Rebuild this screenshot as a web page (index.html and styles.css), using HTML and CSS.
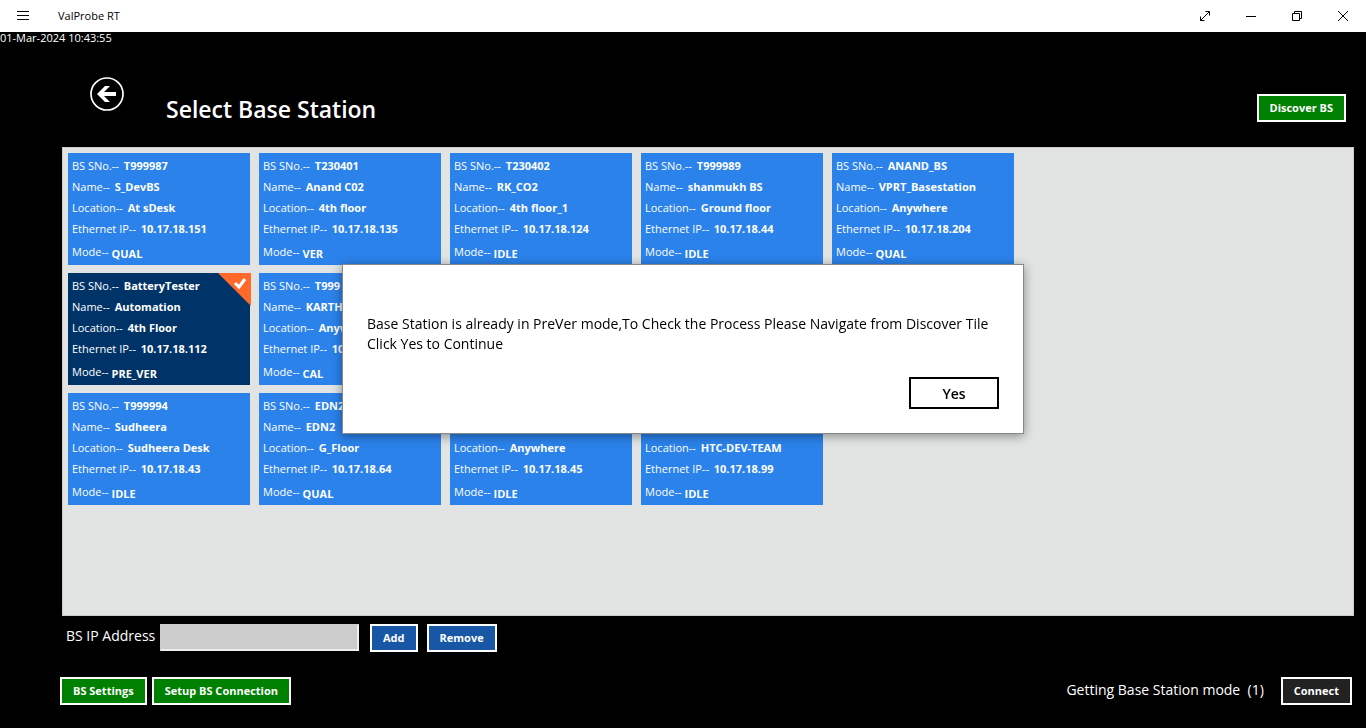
FILE: index.html
```html
<!DOCTYPE html>
<html lang="en">
<head>
<meta charset="utf-8">
<title>ValProbe RT</title>
<link rel="stylesheet" href="styles.css">
</head>
<body>
<header class="titlebar">
  <button class="tb-btn tb-menu" aria-label="Menu"><svg width="12" height="12" viewBox="0 0 12 12" shape-rendering="crispEdges"><path d="M0 1.5h12M0 5.5h12M0 9.5h12"/></svg></button>
  <span class="app-name">ValProbe RT</span>
  <button class="tb-btn" aria-label="Full screen"><svg width="12" height="12" viewBox="0 0 12 12"><path d="M1.500 10.500l9-9M6.500 1.500h4v4M1.500 6.500v4h4"/></svg></button>
  <button class="tb-btn" aria-label="Minimize"><svg width="12" height="12" viewBox="0 0 12 12" shape-rendering="crispEdges"><path d="M1 6.500h10"/></svg></button>
  <button class="tb-btn" aria-label="Restore"><svg width="12" height="12" viewBox="0 0 12 12"><path d="M1.500 3.500h7v7h-7zM3.500 3.500v-2h7v7h-2"/></svg></button>
  <button class="tb-btn" aria-label="Close"><svg width="12" height="12" viewBox="0 0 12 12"><path d="M1 1l10 10M11 1L1 11"/></svg></button>
</header>
<main class="page">
  <time class="clock">01-Mar-2024 10:43:55</time>
  <div class="heading">
    <button class="back" aria-label="Back"><svg width="34" height="34" viewBox="0 0 34 34"><circle cx="17" cy="17" r="16" fill="none" stroke="#fff" stroke-width="1.700"/><path d="M7 17l8-8h5l-6 6h12v4H14l6 6h-5z" fill="#fff"/></svg></button>
    <h1>Select Base Station</h1>
    <button class="btn green">Discover BS</button>
  </div>
  <section class="panel">
    <div class="tiles">
      <article class="tile"><p>BS SNo.-- <b>T999987</b></p><p>Name-- <b>S_DevBS</b></p><p>Location-- <b>At sDesk</b></p><p>Ethernet IP-- <b>10.17.18.151</b></p><p class="mode">Mode--<b>QUAL</b></p></article>
      <article class="tile"><p>BS SNo.-- <b>T230401</b></p><p>Name-- <b>Anand C02</b></p><p>Location-- <b>4th floor</b></p><p>Ethernet IP-- <b>10.17.18.135</b></p><p class="mode">Mode--<b>VER</b></p></article>
      <article class="tile"><p>BS SNo.-- <b>T230402</b></p><p>Name-- <b>RK_CO2</b></p><p>Location-- <b>4th floor_1</b></p><p>Ethernet IP-- <b>10.17.18.124</b></p><p class="mode">Mode--<b>IDLE</b></p></article>
      <article class="tile"><p>BS SNo.-- <b>T999989</b></p><p>Name-- <b>shanmukh BS</b></p><p>Location-- <b>Ground floor</b></p><p>Ethernet IP-- <b>10.17.18.44</b></p><p class="mode">Mode--<b>IDLE</b></p></article>
      <article class="tile"><p>BS SNo.-- <b>ANAND_BS</b></p><p>Name-- <b>VPRT_Basestation</b></p><p>Location-- <b>Anywhere</b></p><p>Ethernet IP-- <b>10.17.18.204</b></p><p class="mode">Mode--<b>QUAL</b></p></article>
      <article class="tile selected"><p>BS SNo.-- <b>BatteryTester</b></p><p>Name-- <b>Automation</b></p><p>Location-- <b>4th Floor</b></p><p>Ethernet IP-- <b>10.17.18.112</b></p><p class="mode">Mode--<b>PRE_VER</b></p>
        <svg class="corner" width="33" height="33" viewBox="0 0 33 33"><path d="M0 0h33v33z" fill="#ff6a2b"/><path d="M17 10l4 4 6-8" fill="none" stroke="#fff" stroke-width="3"/></svg></article>
      <article class="tile"><p>BS SNo.-- <b>T999</b></p><p>Name-- <b>KARTH</b></p><p>Location-- <b>Anyw</b></p><p>Ethernet IP-- <b>10</b></p><p class="mode">Mode--<b>CAL</b></p></article>
      <article class="tile first"><p>BS SNo.-- <b>T999994</b></p><p>Name-- <b>Sudheera</b></p><p>Location-- <b>Sudheera Desk</b></p><p>Ethernet IP-- <b>10.17.18.43</b></p><p class="mode">Mode--<b>IDLE</b></p></article>
      <article class="tile"><p>BS SNo.-- <b>EDN2</b></p><p>Name-- <b>EDN2</b></p><p>Location-- <b>G_Floor</b></p><p>Ethernet IP-- <b>10.17.18.64</b></p><p class="mode">Mode--<b>QUAL</b></p></article>
      <article class="tile"><p>&nbsp;</p><p>&nbsp;</p><p>Location-- <b>Anywhere</b></p><p>Ethernet IP-- <b>10.17.18.45</b></p><p class="mode">Mode--<b>IDLE</b></p></article>
      <article class="tile"><p>&nbsp;</p><p>&nbsp;</p><p>Location-- <b>HTC-DEV-TEAM</b></p><p>Ethernet IP-- <b>10.17.18.99</b></p><p class="mode">Mode--<b>IDLE</b></p></article>
    </div>
  </section>
  <form class="address">
    <label for="ip">BS IP Address</label>
    <input id="ip" type="text">
    <button type="button" class="btn blue">Add</button>
    <button type="button" class="btn blue">Remove</button>
  </form>
  <footer class="footer">
    <button class="btn green">BS Settings</button>
    <button class="btn green">Setup BS Connection</button>
    <span class="status">Getting Base Station mode&nbsp; (1)</span>
    <button class="btn dark">Connect</button>
  </footer>
</main>
<div class="dialog" role="dialog" aria-labelledby="msg">
  <p id="msg">Base Station is already in PreVer mode,To Check the Process Please Navigate from Discover Tile<br>Click Yes to Continue</p>
  <button class="yes">Yes</button>
</div>
</body>
</html>
```
FILE: styles.css
```css
* { box-sizing: border-box; }
body {
  margin: 0;
  min-height: 100vh;
  display: flex;
  flex-direction: column;
  background: #000;
  color: #fff;
  font-family: "Segoe UI", "Open Sans", "Noto Sans", sans-serif;
  font-size: 11px;
}
h1, p { margin: 0; }
button { font-family: inherit; padding: 0; }
svg { display: block; }

.titlebar {
  display: flex;
  align-items: center;
  height: 32px;
  background: #fff;
  color: #000;
}
.tb-btn {
  width: 46px;
  height: 32px;
  display: grid;
  place-items: center;
  border: 0;
  background: none;
}
.tb-btn path { fill: none; stroke: #000; stroke-width: 1; }
.app-name { flex: 1; padding: 0 0 2px 12px; }

.page { flex: 1; display: flex; flex-direction: column; }
.clock { height: 12px; line-height: 12px; }
.heading {
  display: flex;
  align-items: flex-start;
  height: 103px;
  padding: 33px 20px 0 90px;
}
.back {
  width: 34px;
  height: 34px;
  border: 0;
  background: none;
}
h1 {
  flex: 1;
  padding: 15px 0 0 42px;
  font-size: 23px;
  line-height: 34px;
  font-weight: 600;
}
.heading .btn { margin-top: 17px; }

.btn {
  height: 28px;
  padding: 0 11px 2px;
  border: 2px solid #fff;
  color: #fff;
  font-size: 11px;
  font-weight: 700;
}
.green { background: #008000; }
.blue { background: #1757a6; }
.dark { background: #222; }

.panel {
  flex: 1;
  margin: 0 12px 0 62px;
  padding: 5px;
  border: 1px solid #ccc;
  background: #e1e4e3;
}
.tiles {
  display: grid;
  grid-template-columns: repeat(5, 182px);
  gap: 8px 9px;
}
.tile {
  position: relative;
  height: 112px;
  padding: 2px 4px;
  background: #2b82eb;
  line-height: 21px;
}
.tile b { margin-left: 2px; }
.first { grid-column: 1; }
.selected { background: #003468; }
.mode { display: flex; padding-top: 2px; }
.tile .mode b { margin-left: 3px; padding-top: 2px; }
.corner { position: absolute; top: 0; right: -1px; }

.address {
  display: flex;
  height: 61px;
  padding: 8px 0 0 66px;
}
.address label { width: 94px; font-size: 14px; line-height: 24px; }
.address input {
  width: 199px;
  height: 27px;
  margin-right: 11px;
  border: 2px solid #ccc;
  border-right-color: #eee;
  border-bottom-color: #eee;
  background: #ccc;
}
.address .btn { margin-right: 9px; }

.footer {
  display: flex;
  gap: 5px;
  padding: 0 14px 23px 60px;
}
.status {
  flex: 1;
  padding-right: 12px;
  text-align: right;
  font-size: 14px;
  line-height: 26px;
}

.dialog {
  position: fixed;
  top: 264px;
  left: calc(50% - 341px);
  width: 682px;
  padding: 49px 24px 24px;
  border: 1px solid #888;
  background: #fff;
  color: #000;
  box-shadow: 0 2px 10px rgba(0, 0, 0, .4);
  font-size: 14px;
  line-height: 20px;
}
.dialog p { white-space: nowrap; }
.yes {
  display: block;
  width: 90px;
  height: 32px;
  margin: 23px 0 0 auto;
  border: 2px solid #000;
  background: #fff;
  color: #000;
  font-size: 14px;
  font-weight: 600;
}
```
